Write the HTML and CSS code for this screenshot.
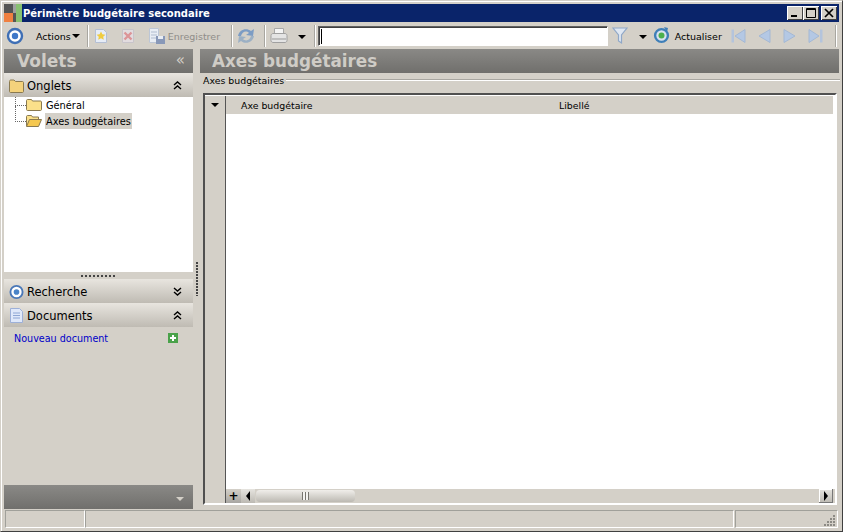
FILE: index.html
```html
<!DOCTYPE html>
<html lang="fr">
<head>
<meta charset="utf-8">
<title>Périmètre budgétaire secondaire</title>
<link rel="stylesheet" href="styles.css">
</head>
<body>
<div class="window">
  <header class="titlebar">
    <svg class="app-icon" width="18" height="18" viewBox="0 0 18 18"><rect width="18" height="18" fill="#88c070"/><rect width="12" height="18" fill="#555"/><rect y="9" width="9" height="9" fill="#f08040"/><rect x="9" y="0" width="3" height="9" fill="#a0a0a0"/></svg>
    <span class="title">Périmètre budgétaire secondaire</span>
    <div class="winbtns">
      <span class="winbtn"><svg width="16" height="14" viewBox="0 0 16 14"><rect x="4" y="9" width="6" height="2" fill="#000"/></svg></span>
      <span class="winbtn"><svg width="16" height="14" viewBox="0 0 16 14"><path d="M3.500 2.500h9v9h-9z M3 3.500h10" fill="none" stroke="#000"/></svg></span>
      <span class="winbtn winbtn-close"><svg width="16" height="14" viewBox="0 0 16 14"><path d="M4 3l8 8M12 3l-8 8" stroke="#000" stroke-width="1.700"/></svg></span>
    </div>
  </header>

  <nav class="toolbar">
    <svg class="tb-first" width="18" height="18" viewBox="0 0 18 18"><circle cx="9" cy="9" r="7" fill="#fff" stroke="#3f6fb5" stroke-width="2.400"/><circle cx="9" cy="9" r="3.200" fill="#3f78c8"/></svg>
    <span class="tb-text tb-actions">Actions</span>
    <span class="caret caret-a"></span>
    <span class="sep sep-1"></span>
    <svg class="ic-new" width="14" height="16" viewBox="0 0 14 16"><path d="M1.500 1.500h8l3 3v10h-11z" fill="#e6ecf6" stroke="#b4bfd4"/><path d="M7 3.500l1.400 2.800 3 .4-2.200 2 .6 3L7 10.300l-2.800 1.400.6-3-2.200-2 3-.4z" fill="#f0cc40"/></svg>
    <svg class="ic-del" width="14" height="16" viewBox="0 0 14 16"><path d="M1.500 1.500h11v13h-11z" fill="#e2dcdf" stroke="#c8c4ca"/><path d="M3.500 4.500l7 7M10.500 4.500l-7 7" stroke="#dc9498" stroke-width="2.400"/></svg>
    <svg class="ic-save" width="18" height="18" viewBox="0 0 18 18"><path d="M1.500 1.500h9v14h-9z" fill="#e8edf4" stroke="#bcc6d6"/><path d="M3 5h6M3 8h6M3 11h6" stroke="#b0bccf"/><rect x="8" y="9" width="9" height="8" fill="#8898b8"/><rect x="10" y="9" width="5" height="3" fill="#e8edf4"/></svg>
    <span class="tb-text tb-disabled">Enregistrer</span>
    <span class="sep sep-2"></span>
    <svg class="ic-sync" width="18" height="18" viewBox="0 0 18 18"><path d="M1 9C2 3 9 0 14 4l3-2-1 7-7-1 3-2C9 3 5 5 4 9z" fill="#7c9cc4"/><path d="M17 9c-1 6-8 9-13 5l-3 2 1-7 7 1-3 2c3 3 7 1 8-3z" fill="#9cb0c4"/></svg>
    <span class="sep sep-3"></span>
    <svg class="ic-print" width="18" height="16" viewBox="0 0 18 16"><path d="M4.500.500h9v6h-9z" fill="#f4f4f4" stroke="#a8a8a8"/><path d="M1 7.500c0-1 1-2 2-2h12c1 0 2 1 2 2v5c0 1-1 2-2 2H3c-1 0-2-1-2-2z" fill="#e4e4e4" stroke="#a0a0a0"/><path d="M2 11h14" stroke="#999"/></svg>
    <span class="caret caret-p"></span>
    <span class="sep sep-4"></span>
    <span class="searchbox"><span class="cursor"></span></span>
    <svg class="ic-filter" width="16" height="18" viewBox="0 0 16 18"><path d="M1 1h14L9.500 8v8l-3-2V8z" fill="#dfe7f2" stroke="#90a8c8" stroke-width="1.200"/></svg>
    <span class="caret caret-f"></span>
    <svg class="ic-refresh" width="17" height="17" viewBox="0 0 17 17"><circle cx="8.500" cy="8.500" r="6.400" fill="#d8e2ee" stroke="#3f7fb8" stroke-width="2.400"/><circle cx="8.500" cy="8.500" r="3" fill="#4cb04c"/><path d="M11 0l4 1-1 4z" fill="#3f7fb8"/></svg>
    <span class="tb-text tb-refresh">Actualiser</span>
    <svg class="nav nav-1" width="15" height="14" viewBox="0 0 15 14"><rect x="0.500" y="0.500" width="2.500" height="13" fill="#b4c4dc"/><path d="M14 0.500v13L4 7z" fill="#b4c8e4" stroke="#a4b8d4"/></svg>
    <svg class="nav" width="13" height="14" viewBox="0 0 13 14"><path d="M12 0.500v13L1 7z" fill="#b4c8e4" stroke="#a4b8d4"/></svg>
    <svg class="nav" width="13" height="14" viewBox="0 0 13 14"><path d="M1 0.500v13L12 7z" fill="#b4c8e4" stroke="#a4b8d4"/></svg>
    <svg class="nav" width="15" height="14" viewBox="0 0 15 14"><path d="M1 0.500v13L11 7z" fill="#b4c8e4" stroke="#a4b8d4"/><rect x="12" y="0.500" width="2.500" height="13" fill="#b4c4dc"/></svg>
    <span class="sep sep-5"></span>
  </nav>

  <div class="body">
    <aside class="side">
      <div class="band band-main"><span class="band-title">Volets</span><span class="chev-light">«</span></div>
      <div class="band band-sect">
        <svg class="ic-sect" width="15" height="14" viewBox="0 0 15 14"><path d="M.500 2.500c0-1 .5-1.500 1.500-1.500h3l1.500 1.500h7c.5 0 1 .5 1 1v9c0 .5-.5 1-1 1h-12c-.5 0-1-.5-1-1z" fill="#f4d27c" stroke="#8a7a50"/></svg>
        <span>Onglets</span>
        <svg class="dbl" width="9" height="9" viewBox="0 0 9 9"><path d="M1 4l3.500-3L8 4M1 8l3.500-3L8 8" fill="none" stroke="#000" stroke-width="1.400"/></svg>
      </div>
      <div class="tree">
        <div class="tree-row">
          <span class="connector connector-first"></span>
          <svg width="16" height="12" viewBox="0 0 16 12"><path d="M.500 1.500c0-.5.5-1 1-1h4l1 1.500h8c.5 0 1 .5 1 1v7.500c0 .5-.5 1-1 1h-13c-.5 0-1-.5-1-1z" fill="#fbe08a" stroke="#8a7a50"/></svg>
          <span class="tree-label">Général</span>
        </div>
        <div class="tree-row">
          <span class="connector connector-last"></span>
          <svg width="16" height="12" viewBox="0 0 16 12"><path d="M.500 11V1.500c0-.5.5-1 1-1h4l1 1.500h6v2.500" fill="#fbe08a" stroke="#8a7a50"/><path d="M.500 11.500l3-7h12l-3 7z" fill="#f5c850" stroke="#8a7a50"/></svg>
          <span class="tree-label tree-selected">Axes budgétaires</span>
        </div>
      </div>
      <div class="side-grip"><span class="dots-h"></span></div>
      <div class="band band-sect">
        <svg class="ic-sect" width="16" height="16" viewBox="0 0 16 16"><circle cx="8" cy="8" r="6.500" fill="#fff" stroke="#4a78b8" stroke-width="2"/><circle cx="8" cy="8" r="3" fill="#4a84c8"/></svg>
        <span>Recherche</span>
        <svg class="dbl" width="9" height="9" viewBox="0 0 9 9"><path d="M1 1l3.500 3L8 1M1 5l3.500 3L8 5" fill="none" stroke="#000" stroke-width="1.400"/></svg>
      </div>
      <div class="band band-sect">
        <svg class="ic-sect" width="13" height="15" viewBox="0 0 13 15"><path d="M.500.500h9l3 3v11H.500z" fill="#dfe8fa" stroke="#9db0d8"/><path d="M3 5h7M3 7.500h7M3 10h7" stroke="#8ea6d4"/></svg>
        <span>Documents</span>
        <svg class="dbl" width="9" height="9" viewBox="0 0 9 9"><path d="M1 4l3.500-3L8 4M1 8l3.500-3L8 8" fill="none" stroke="#000" stroke-width="1.400"/></svg>
      </div>
      <div class="docs">
        <a class="doc-link">Nouveau document</a>
        <svg width="10" height="10" viewBox="0 0 10 10"><rect width="10" height="10" fill="#4aa24a"/><path d="M5 2v6M2 5h6" stroke="#fff" stroke-width="2"/></svg>
      </div>
      <div class="band band-foot"><span class="foot-caret"></span></div>
    </aside>

    <div class="splitter"><span class="dots-v"></span></div>

    <main class="main">
      <div class="band band-main band-content"><span class="band-title band-title-main">Axes budgétaires</span></div>
      <div class="group-legend"><span>Axes budgétaires</span><span class="legend-line"></span></div>
      <section class="grid">
        <div class="grid-left">
          <div class="grid-corner"><span class="caret caret-g"></span></div>
        </div>
        <div class="grid-right">
          <div class="grid-head">
            <span class="col col-1">Axe budgétaire</span>
            <span class="col">Libellé</span>
          </div>
          <div class="grid-body"></div>
          <div class="hscroll">
            <span class="grid-plus">+</span>
            <span class="sb-btn"><span class="arrow-left"></span></span>
            <span class="sb-thumb"><span class="grip"></span></span>
            <span class="sb-btn sb-btn-right"><span class="arrow-right"></span></span>
          </div>
        </div>
      </section>
    </main>
  </div>

  <footer class="status">
    <span class="cell cell-1"></span>
    <span class="cell cell-2"></span>
    <span class="cell cell-3">
      <svg width="12" height="12" viewBox="0 0 12 12"><path d="M9 1h2v2H9zM6 4h2v2H6zM9 4h2v2H9zM3 7h2v2H3zM6 7h2v2H6zM9 7h2v2H9zM0 10h2v2H0zM3 10h2v2H3zM6 10h2v2H6zM9 10h2v2H9z" fill="#8c8a84"/></svg>
    </span>
  </footer>
</div>
</body>
</html>
```

FILE: styles.css
```css
* { box-sizing: border-box; }
html, body { margin: 0; padding: 0; }
body { width: 843px; height: 532px; overflow: hidden; font-family: "DejaVu Sans", "Liberation Sans", sans-serif; font-size: 10px; color: #000; background: #d4d0c8; }

.window { width: 843px; height: 532px; display: flex; flex-direction: column; padding: 3px; background: #d4d0c8; border: 1px solid #404040; border-top-color: #d4d0c8; border-left-color: #d4d0c8; box-shadow: inset 1px 1px 0 #fff; }

.titlebar { height: 18px; flex: none; display: flex; align-items: center; background: #0a246a; color: #fff; }
.app-icon { flex: none; }
.title { margin-left: 1px; font: bold 10px "DejaVu Sans", sans-serif; }
.winbtns { margin-left: auto; margin-right: 2px; display: flex; }
.winbtn { width: 16px; height: 14px; background: #d4d0c8; box-shadow: inset 1px 1px 0 #fff, inset -1px -1px 0 #404040; display: block; }
.winbtn svg { display: block; }
.winbtn-close { margin-left: 2px; }

.toolbar { height: 27px; flex: none; display: flex; align-items: center; }
.toolbar > svg { flex: none; }
.tb-first { margin-left: 2px; }
.tb-text { font-family: "DejaVu Sans", sans-serif; font-size: 9.500px; line-height: 12px; padding-top: 2px; white-space: nowrap; }
.tb-actions { margin-left: 12px; }
.tb-disabled { color: #8f8d88; margin-left: 2px; width: 53px; }
.tb-refresh { margin-left: 5px; width: 46px; }
.caret { width: 0; height: 0; border-left: 4px solid transparent; border-right: 4px solid transparent; border-top: 4px solid #000; flex: none; }
.caret-a { margin-left: 1px; margin-top: 1px; }
.caret-p { margin-left: 10px; margin-top: 2px; }
.caret-f { margin-left: 11px; margin-top: 2px; }
.sep { width: 2px; height: 22px; flex: none; background: linear-gradient(to right, #a8a6a0 50%, #fff 50%); }
.sep-1 { margin-left: 7px; }
.ic-new { margin-left: 5px; }
.ic-del { margin-left: 13px; }
.ic-save { margin-left: 13px; }
.sep-2 { margin-left: 10px; }
.ic-sync { margin-left: 4px; }
.sep-3 { margin-left: 9px; }
.ic-print { margin-left: 4px; }
.sep-4 { margin-left: 8px; }
.searchbox { width: 290px; height: 20px; margin-left: 2px; background: #fff; border: 1px solid; border-color: #606060 #fff #fff #606060; flex: none; box-shadow: inset 1px 1px 0 #404040; padding: 2px 0 0 2px; }
.cursor { display: block; width: 1px; height: 15px; background: #000; }
.ic-filter { margin-left: 4px; }
.ic-refresh { margin-left: 6px; }
.nav { margin-left: 12px; }
.toolbar .nav-1 { margin-left: 10px; }
.sep-5 { margin-left: 12px; }

.body { flex: 1; min-height: 0; display: flex; }
.side { width: 189px; flex: none; display: flex; flex-direction: column; }
.band { height: 24px; flex: none; display: flex; align-items: center; }
.band-main, .band-foot { background: linear-gradient(to bottom, #8a8986, #706f6c); }
.band-title { font: bold 17px "DejaVu Sans", sans-serif; color: #cfccc6; margin-left: 13px; }
.band-title-main { margin-left: 12px; font-size: 16.800px; }
.chev-light { margin-left: auto; margin-right: 8px; color: #d4d0c8; font: 15px "DejaVu Sans", sans-serif; position: relative; top: -1px; }
.band-sect { background: linear-gradient(to bottom, #e8e5df, #bfbbb3); font: 11.500px "DejaVu Sans", sans-serif; padding-top: 1px; }
.ic-sect { margin-left: 5px; margin-right: 3px; flex: none; width: 15px; }
.dbl { margin-left: auto; margin-right: 11px; }
.tree { height: 175px; flex: none; background: #fff; padding: 0 0 0 22px; }
.tree-row { height: 16px; display: flex; align-items: center; position: relative; }
.tree-row svg { flex: none; }
.tree-label { font: 9.800px "DejaVu Sans", sans-serif; margin-left: 3px; padding: 1px 1px 0; height: 16px; line-height: 16px; white-space: nowrap; }
.tree-selected { background: #d4d0c8; }
.connector { position: absolute; left: -11px; width: 11px; border-bottom: 1px dotted #666; border-left: 1px dotted #666; }
.connector-first { top: 0; height: 9px; }
.connector-last { top: -7px; height: 16px; }
.side-grip { height: 7px; flex: none; display: flex; align-items: center; justify-content: center; }
.dots-h { width: 34px; height: 2px; background: repeating-linear-gradient(to right, #444 0 2px, transparent 2px 4px); margin-left: -1px; }
.docs { flex: 1; padding: 4px 15px 0 10px; display: flex; align-items: flex-start; justify-content: space-between; }
.docs svg { margin-top: 2px; }
.doc-link { color: #0000c8; font: 9.600px/15px "DejaVu Sans", sans-serif; }
.band-foot { justify-content: flex-end; }
.foot-caret { margin-right: 9px; margin-top: 4px; width: 0; height: 0; border-left: 4px solid transparent; border-right: 4px solid transparent; border-top: 4px solid #d4d0c8; }

.splitter { width: 7px; flex: none; display: flex; align-items: center; justify-content: center; }
.dots-v { width: 2px; height: 34px; background: repeating-linear-gradient(to bottom, #444 0 2px, transparent 2px 3px); }

.main { flex: 1; min-width: 0; display: flex; flex-direction: column; }
.group-legend { height: 14px; padding-left: 3px; display: flex; align-items: center; font: 9.400px "DejaVu Sans", sans-serif; flex: none; }
.legend-line { flex: 1; height: 2px; margin-left: 2px; background: linear-gradient(to bottom, #a8a6a0 50%, #fff 50%); margin-right: -1px; }
.grid { margin: 6px 2px 4px 3px; flex: 1; min-height: 0; display: flex; border: 2px solid; border-color: #505050 #fff #fff #505050; background: #fff; padding-top: 1px; }
.grid-left { width: 21px; flex: none; background: #d4d0c8; border-right: 1px solid #555; }
.grid-corner { height: 18px; display: flex; align-items: center; justify-content: center; }
.grid-right { flex: 1; min-width: 0; display: flex; flex-direction: column; }
.grid-head { height: 18px; flex: none; margin-right: 2px; background: #d4d0c8; display: flex; align-items: center; font: 9.400px "DejaVu Sans", sans-serif; }
.col { display: block; }
.col-1 { width: 318px; margin-left: 15px; }
.grid-body { flex: 1; background: #fff; }
.hscroll { height: 14px; flex: none; background: #d4d0c8; display: flex; align-items: center; padding-right: 2px; }
.grid-plus { width: 15px; height: 14px; flex: none; background: linear-gradient(to bottom, #d4d0c8, #a8a6a2); text-align: center; font: bold 12px/14px "DejaVu Sans", sans-serif; }
.sb-btn { width: 14px; height: 14px; flex: none; display: flex; align-items: center; justify-content: center; background: linear-gradient(to bottom, #e6e4df, #bcb9b2); }
.sb-btn-right { margin-left: auto; box-shadow: inset -1px -1px 0 #777, inset 1px 1px 0 #fff; }
.arrow-left { border-top: 5px solid transparent; border-bottom: 5px solid transparent; border-right: 4px solid #000; }
.arrow-right { border-top: 5px solid transparent; border-bottom: 5px solid transparent; border-left: 4px solid #000; }
.sb-thumb { width: 99px; height: 12px; margin-left: 1px; flex: none; border-radius: 4px; background: linear-gradient(to bottom, #f0eeea, #bcb9b2); display: flex; align-items: center; justify-content: center; }
.grip { width: 7px; height: 8px; background: repeating-linear-gradient(to right, #77756f 0 1px, #f4f3f0 1px 3px); }

.status { height: 18px; flex: none; margin-top: 1px; display: flex; padding: 0 1px; }
.cell { height: 18px; border: 1px solid; border-color: #a0a09a #fff #fff #a0a09a; }
.cell-1 { width: 80px; }
.cell-2 { flex: 1; }
.cell-3 { width: 103px; margin-left: 1px; display: flex; align-items: flex-end; justify-content: flex-end; padding: 0 1px 1px 0; }
```
